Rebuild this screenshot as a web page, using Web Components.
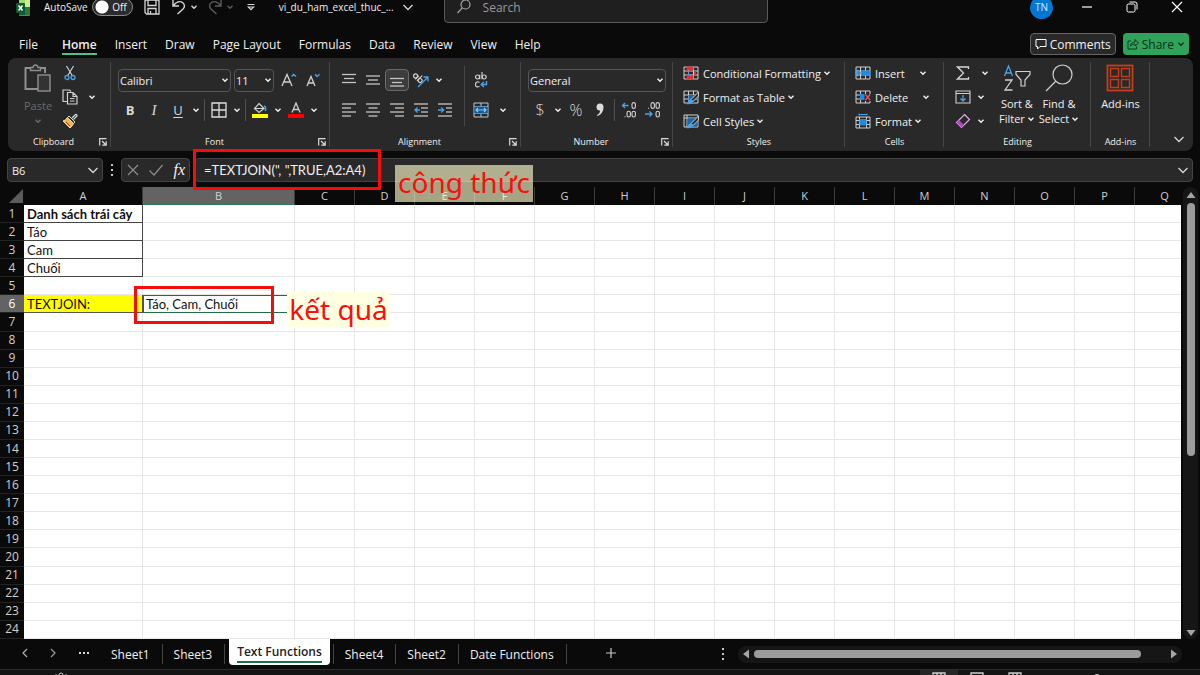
<!DOCTYPE html>
<html lang="vi">
<head>
<meta charset="utf-8">
<meta name="viewport" content="width=device-width, initial-scale=1">
<title>vi_du_ham_excel_thuc_... - Excel</title>
<style>
  html, body { margin: 0; height: 100%; overflow: hidden; background: #0a0a0a; }
  body { font-family: "Open Sans", "Noto Sans", sans-serif; font-size: 11px; color: #f0f0f0; }
</style>
</head>
<body>
<xl-app></xl-app>

<script>
const BASE = `
  *, *::before, *::after { box-sizing: border-box; }
  button, input, select { font: inherit; color: inherit; background: none; border: 0; margin: 0; padding: 0; }
  button { display: inline-flex; align-items: center; justify-content: center; white-space: nowrap; }
`;

class Base extends HTMLElement {
  connectedCallback() {
    if (this.shadowRoot) return;
    this.attachShadow({ mode: 'open' }).innerHTML = `<style>${BASE}${this.styles()}</style>${this.markup()}`;
  }
  styles() { return ''; }
  markup() { return '<slot></slot>'; }
}

/* name: [width, height, svg body] */
const lines = rows => rows.map(([y, a, b]) => `<path d="M${a} ${y}H${b}" stroke="#c4c4c4" stroke-width="1.3"/>`).join('');
const table = `<path d="M1 1H15V13H1ZM1 5H15M1 9H15M5.5 1V13M10.5 1V13" stroke="#d0d0d0"/>`;
const brush = `<path d="M15.500 2L8 9.500L10 11.500L15.500 6Z" fill="#2b2b2b" stroke="#cfcfcf"/><path d="M8 9.500Q5 9.500 5 12Q5 13.500 3 14Q9 15 10 11.500Z" fill="#4aa3e8"/>`;
const ICONS = {
  chev: [8, 8, `<path d="M1.500 2.800L4 5.300L6.500 2.800" stroke="currentColor" stroke-width="1.4"/>`],
  chevBig: [12, 12, `<path d="M1.500 4L6 8.500L10.500 4" stroke="#d6d6d6" stroke-width="1.3"/>`],
  logo: [14, 18, `<rect x="3" y="0" width="11" height="18" rx="1" fill="#21a366"/><path d="M3 0H9V9H3Z" fill="#9bdc6a"/><path d="M9 0H14V9H9Z" fill="#cdee8f"/><path d="M3 9H14V17H3Z" fill="#185c37"/><path d="M9 9H14V17H9Z" fill="#2a7a3c"/><rect x="0" y="5" width="9" height="10" rx="1" fill="#0f5a31"/><path d="M2.500 7.500L6.500 12.500M6.500 7.500L2.500 12.500" stroke="#fff" stroke-width="1.5"/>`],
  save: [16, 16, `<path d="M1 1H15V15H2.500L1 13.500ZM4 1V6.500H12V1M4 15V9.500H12V15M6.500 12V15" stroke="#d6d6d6" stroke-width="1.3"/>`],
  undo: [14, 16, `<path d="M1 1V7H7M1.500 6.500C4 3 8 1.500 10.500 3.500C13 5.500 13 8 11 10L5.500 15" stroke="currentColor" stroke-width="1.4"/>`],
  redo: [14, 16, `<path d="M13 1V7H7M12.500 6.500C10 3 6 1.500 3.500 3.500C1 5.500 1 8 3 10L8.500 15" stroke="currentColor" stroke-width="1.4"/>`],
  custom: [8, 8, `<path d="M.5 1.500H7.500M1.300 4L4 6.700L6.700 4Z" stroke="#d6d6d6" stroke-width="1.1"/>`],
  search: [14, 16, `<circle cx="8.500" cy="5.500" r="4.500" stroke="#a8a8a8" stroke-width="1.2"/><path d="M5.300 8.800L.5 14" stroke="#a8a8a8" stroke-width="1.2"/>`],
  min: [10, 10, `<path d="M0 5H10" stroke="#fff" stroke-width="1.2"/>`],
  restore: [12, 12, `<rect x="1" y="3" width="8" height="8" rx="1.500" stroke="#fff"/><path d="M3.500 1H9Q11 1 11 3V8.500" stroke="#fff"/>`],
  close: [12, 12, `<path d="M1 1L11 11M11 1L1 11" stroke="#fff" stroke-width="1.2"/>`],
  comment: [12, 12, `<path d="M1 1.500H11V8.500H5L2.500 11V8.500H1Z" stroke="#fff"/>`],
  share: [12, 12, `<path d="M4 3H1V11H9.500V8.500M3.500 8C4 5 6 4 8 4V1.500L11.500 5L8 8V6C6 6 5 6.500 3.500 8Z" stroke="#0d3a1d"/>`],
  paste: [28, 30, `<path d="M6 4H1.500V25H14M17 4H21V9" stroke="#8f8f8f" stroke-width="2"/><path d="M6.500 6.500V3.500H9Q9.500 1 11.500 1T14 3.500H16.500V6.500Z" stroke="#8f8f8f" stroke-width="1.4"/><rect x="14" y="11" width="12" height="16" stroke="#8f8f8f" stroke-width="1.4" fill="#333"/>`],
  cut: [12, 16, `<path d="M2.500 1L8.500 11M9.500 1L3.500 11" stroke="#d0d0d0" stroke-width="1.2"/><circle cx="3" cy="12.500" r="2" stroke="#4aa3e8" stroke-width="1.300"/><circle cx="9" cy="12.500" r="2" stroke="#4aa3e8" stroke-width="1.300"/>`],
  copy: [16, 16, `<path d="M5 12.500H1V1H7.500L9 2.500" stroke="#d0d0d0" stroke-width="1.200"/><path d="M5.500 3.500H11L15 7.500V15H5.500ZM11 3.500V7.500H15M8 9.500H12.500M8 12H12.500" stroke="#d0d0d0" stroke-width="1.200"/>`],
  painter: [16, 16, `<path d="M10 5L13.500 1.500Q15 1 15 3L11.500 6.500" stroke="#ddd" fill="#2b2b2b" stroke-width="1.200"/><path d="M7 3L13 9L11.500 10.500L5.500 4.500Z" stroke="#ddd"/><path d="M5.500 4.700Q3 8 1 8L8 15Q11 12.500 11.500 10.500Z" fill="#f0b24a" stroke="#ffe2a0"/><path d="M4 9L8 13" stroke="#7b4a10"/>`],
  launch: [8, 8, `<path d="M.7 7.500V.7H7.500M3 3L7 7M7.200 3.300V7.200H3.300" stroke="#dcdcdc" stroke-width="1.200"/>`],
  bigA: [16, 16, `<path d="M1 14L6 2.500L11 14M2.700 10H9.300" stroke="#d0d0d0" stroke-width="1.300"/><path d="M10.500 4.500L12.700 2.300L15 4.500" stroke="#4aa3e8" stroke-width="1.300"/>`],
  smallA: [16, 16, `<path d="M2 14L6 4.500L10 14M3.400 11H8.600" stroke="#d0d0d0" stroke-width="1.300"/><path d="M10 2.300L12.200 4.500L14.500 2.300" stroke="#4aa3e8" stroke-width="1.300"/>`],
  borders: [16, 16, `<path d="M1 1H15V15H1ZM1 8H15M8 1V15" stroke="#dedede" stroke-width="1.300"/>`],
  fill: [16, 16, `<path d="M7 1.500L12 6.500L7 10.500L2.500 6.500Z" stroke="#d0d0d0" stroke-width="1.200"/><path d="M2.500 6.500H12" stroke="#d0d0d0"/><path d="M12 4Q14 4 13.500 9" stroke="#4aa3e8" stroke-width="1.600"/><rect x="0" y="12" width="16" height="4" fill="#ff0"/>`],
  fontcolor: [16, 16, `<path d="M4 10.500L8 1L12 10.500M5.400 7.500H10.600" stroke="#d0d0d0" stroke-width="1.300"/><rect x="0" y="12" width="16" height="4" fill="#f00"/>`],
  aTop: [14, 14, lines([[1.5,0,14],[5.5,2,12],[9.5,0,14]])],
  aMid: [14, 14, lines([[3,0,14],[7,2,12],[11,0,14]])],
  aBot: [14, 14, lines([[5.5,0,14],[9.5,2,12],[13,0,14]])],
  left: [14, 14, lines([[1,0,14],[5,0,9],[9,0,14],[13,0,9]])],
  center: [14, 14, lines([[1,0,14],[5,2.5,11.5],[9,0,14],[13,2.5,11.5]])],
  right: [14, 14, lines([[1,0,14],[5,5,14],[9,0,14],[13,5,14]])],
  outdent: [14, 14, lines([[1,0,14],[5,7,14],[9,7,14],[13,0,14]]) + `<path d="M6 7H1M3.500 4.500L1 7L3.500 9.500" stroke="#4aa3e8" stroke-width="1.300"/>`],
  indent: [14, 14, lines([[1,0,14],[5,8,14],[9,8,14],[13,0,14]]) + `<path d="M0 7H5.500M3.200 4.500L5.700 7L3.200 9.500" stroke="#4aa3e8" stroke-width="1.300"/>`],
  orient: [16, 16, `<g transform="rotate(45 5 5)" stroke="#d0d0d0" stroke-width="1.200"><circle cx="2.500" cy="6" r="2"/><path d="M4.700 3.500V8.500M7 1V8.500"/><circle cx="9" cy="6" r="2"/></g><path d="M5 15L14.500 5.500M10.500 5H15V9.500" stroke="#4aa3e8" stroke-width="1.300"/>`],
  wrap: [14, 16, `<g stroke="#d0d0d0" stroke-width="1.200"><circle cx="3.500" cy="5" r="2"/><path d="M5.700 2.800V7.300M8 0V7.300"/><circle cx="10.200" cy="5" r="2"/><path d="M5.500 10.300Q1.500 9 1.500 12.500T5.500 14.500"/></g><path d="M12.500 9V12.500H7.500M9.800 10L7.300 12.500L9.800 15" stroke="#4aa3e8" stroke-width="1.500"/>`],
  merge: [16, 16, `<path d="M1 1H15V15H1ZM1 4.500H15M1 11.500H15M8 1V4.500M8 11.500V15" stroke="#b8c8d4"/><rect x="1.500" y="4.500" width="13" height="7" fill="#0d5a94"/><path d="M3 8H13M5 6L3 8L5 10M11 6L13 8L11 10" stroke="#8cc8f5" stroke-width="1.200"/>`],
  incDec: [16, 16, `<path d="M7.500 3.500H1.500M4 1L1.500 3.500L4 6" stroke="#4aa3e8" stroke-width="1.300"/><g stroke="#d0d0d0" stroke-width="1.100"><rect x="11" y=".6" width="3.400" height="5.800" rx="1.700"/><rect x="6" y="9.200" width="3.400" height="5.800" rx="1.700"/><rect x="11" y="9.200" width="3.400" height="5.800" rx="1.700"/><path d="M3.500 14.800H4.600"/></g>`],
  decDec: [16, 16, `<path d="M0 12H7M4.500 9.500L7 12L4.500 14.500" stroke="#4aa3e8" stroke-width="1.300"/><g stroke="#d0d0d0" stroke-width="1.100"><rect x="6" y=".6" width="3.400" height="5.800" rx="1.700"/><rect x="11" y=".6" width="3.400" height="5.800" rx="1.700"/><rect x="11" y="9.200" width="3.400" height="5.800" rx="1.700"/><path d="M3 6.200H4.100"/></g>`],
  comma: [10, 16, `<path d="M1.500 5A3.500 3.500 0 0 1 8.500 5C8.500 9.500 6 13 2.500 14L2 13C4 12 5 10.500 5 8.500A3.500 3.500 0 0 1 1.500 5Z" fill="#dcdcdc"/>`],
  cond: [16, 14, table + `<path d="M3.500 .5H10.500V4.500H3.500ZM3.500 9H10.500V13.500H3.500Z" fill="#e0303a"/><path d="M5.500 5V9H9" stroke="#4aa3e8"/><path d="M12 5V9" stroke="#e0303a" stroke-width="2"/>`],
  fmtTable: [16, 15, table + `<path d="M5.500 5H15V9H11V13H5.500Z" fill="#0f6cbd"/>` + brush],
  cellStyles: [16, 15, `<path d="M1 1H15V13H1ZM1 4H15M4 1V13" stroke="#d0d0d0"/><path d="M4.500 4.500H14.500V12.500H4.500Z" fill="#0f6cbd"/>` + brush],
  insert: [16, 14, table + `<path d="M6 4.500H15.500V9.500H6Z" fill="#1f8ae0"/><path d="M7 7H1M3.500 4L.8 7L3.500 10" stroke="#4aa3e8" stroke-width="1.600"/>`],
  del: [16, 14, table + `<path d="M5 4H10V10H5Z" fill="#1f8ae0"/><path d="M9.500 4H16V11H9.500Z" fill="#2b2b2b"/><path d="M10.500 4.500L15 10M15 4.500L10.500 10" stroke="#e8505a" stroke-width="1.400"/>`],
  format: [16, 16, `<path d="M1 4H15V15H1ZM1 7.500H15M1 11.500H15M4.500 4V15M11.500 4V15" stroke="#d0d0d0"/><path d="M4.500 6H11.500V12.500H4.500Z" fill="#1f8ae0"/><path d="M4 1.500H12M4 .5V2.500M12 .5V2.500" stroke="#4aa3e8"/>`],
  sigma: [14, 14, `<path d="M12.500 3V1H1.500L7.500 7L1.500 13H12.500V11" stroke="#d6d6d6" stroke-width="1.300"/>`],
  down: [16, 14, `<path d="M1 1H15V13H1ZM1 3.500H15" stroke="#d0d0d0" stroke-width="1.100"/><path d="M8 5V11M5.500 8.500L8 11L10.500 8.500" stroke="#4aa3e8" stroke-width="1.300"/>`],
  eraser: [16, 16, `<path d="M9.500 1.500L14.500 6.500L6.500 14.500L1.500 9.500Z" stroke="#dcb0e0" stroke-width="1.200"/><path d="M4 7L9 12L6.500 14.500L1.500 9.500Z" fill="#b146c2"/>`],
  sort: [28, 28, `<path d="M1.500 12L5.500 2L9.500 12M3 9H8" stroke="#4aa3e8" stroke-width="1.300"/><path d="M2 16H9L2 26H9.500" stroke="#d0d0d0" stroke-width="1.300"/><path d="M13 7.500H27V10.500L22 16V22H18V16L13 10.500Z" stroke="#d0d0d0" stroke-width="1.200"/>`],
  find: [28, 28, `<circle cx="17.500" cy="10.500" r="9.500" stroke="#d0d0d0" stroke-width="1.200"/><path d="M10.500 17.500L1 27" stroke="#d0d0d0" stroke-width="1.300"/>`],
  addins: [28, 28, `<rect x="1.500" y="1.500" width="25" height="25" stroke="#c43e1c" stroke-width="1.800"/><path d="M4.500 4.500H12.500V12.500H4.500ZM15.500 4.500H23.500V12.500H15.500ZM4.500 15.500H12.500V23.500H4.500ZM15.500 15.500H23.500V23.500H15.500Z" stroke="#c43e1c" stroke-width="1.400"/>`],
  cross: [12, 12, `<path d="M1 1L11 11M11 1L1 11" stroke="#8c8c8c" stroke-width="1.200"/>`],
  tick: [14, 12, `<path d="M.5 6.500L5 11L13.500 1" stroke="#8c8c8c" stroke-width="1.200"/>`],
  dotsV: [4, 14, `<path d="M1 1H3V3H1ZM1 6H3V8H1ZM1 11H3V13H1Z" fill="#c8c8c8"/>`],
  dotsH: [12, 4, `<path d="M1 1H3V3H1ZM5 1H7V3H5ZM9 1H11V3H9Z" fill="#d8d8d8"/>`],
  prev: [6, 10, `<path d="M5 1L1 5L5 9" stroke="#b0b0b0" stroke-width="1.200"/>`],
  next: [6, 10, `<path d="M1 1L5 5L1 9" stroke="#9a9a9a" stroke-width="1.200"/>`],
  plus: [12, 12, `<path d="M1 6H11M6 1V11" stroke="#c8c8c8" stroke-width="1.200"/>`],
  up: [10, 8, `<path d="M5 1L9.500 7H.5Z" fill="#a6a6a6"/>`],
  dn: [10, 8, `<path d="M5 7L9.500 1H.5Z" fill="#a6a6a6"/>`],
  lt: [8, 10, `<path d="M1 5L7 .5V9.500Z" fill="#a6a6a6"/>`],
  rt: [8, 10, `<path d="M7 5L1 .5V9.500Z" fill="#a6a6a6"/>`],
  corner: [14, 14, `<path d="M14 0V14H0Z" fill="#5c5c5c"/>`],
  viewGrid: [14, 12, `<path d="M1 1H13V11H1ZM1 4H13M5 1V11M9 1V11" stroke="#d0d0d0" stroke-width="1.300"/>`],
  viewPage: [14, 12, `<path d="M1 1H13V11H1Z" stroke="#d0d0d0" stroke-width="1.300"/><path d="M3 3H11V11H3Z" fill="#8a8a8a"/>`],
  person: [12, 12, `<circle cx="6" cy="3" r="2" stroke="#c8c8c8"/><path d="M0 3H2M10 3H12M2 9Q6 5 10 9" stroke="#c8c8c8"/>`],
};

customElements.define('xl-icon', class extends Base {
  styles() { return `:host { display: inline-flex; flex: none; } svg { display: block; fill: none; }`; }
  markup() {
    const [w, h, body] = ICONS[this.getAttribute('name')];
    return `<svg width="${w}" height="${h}" viewBox="0 0 ${w} ${h}" fill="none" aria-hidden="true">${body}</svg>`;
  }
});

/* Square ribbon tool, with an optional narrow menu arrow beside it. */
customElements.define('xl-tool', class extends Base {
  styles() { return `
    :host { display: inline-flex; align-items: center; height: 24px; }
    .main { width: 24px; height: 22px; border-radius: 4px; font-size: 13px; color: #d8d8d8; }
    .arrow { width: 12px; height: 22px; }
    :host([pressed]) .main { background: #3d3d3d; border: 1px solid #6a6a6a; }
    :host([spread]) .arrow { margin-left: 4px; }`; }
  markup() {
    const t = this.title, i = this.getAttribute('icon');
    return `<button class="main" aria-label="${t}">${i ? `<xl-icon name="${i}"></xl-icon>` : '<slot></slot>'}</button>` +
      (this.hasAttribute('menu') ? `<button class="arrow" aria-label="${t} menu"><xl-icon name="chev"></xl-icon></button>` : '');
  }
});

/* Icon with a text label on one line. */
customElements.define('xl-command', class extends Base {
  styles() { return `
    :host { display: flex; align-items: center; height: 24px; }
    .main { gap: 4px; height: 22px; }
    .arrow { width: 8px; height: 22px; margin-left: 2px; }
    :host([split]) .arrow { margin-left: 14px; }`; }
  markup() { return `<button class="main"><xl-icon name="${this.getAttribute('icon')}"></xl-icon><slot></slot></button>
    <button class="arrow" aria-label="${this.textContent} menu"><xl-icon name="chev"></xl-icon></button>`; }
});

/* Tall command: a large icon over one or two lines of text. */
customElements.define('xl-big', class extends Base {
  styles() { return `
    :host { display: block; }
    button { flex-direction: column; justify-content: flex-start; padding-top: 3px; }
    xl-icon { margin-bottom: 4px; }
    span { display: flex; align-items: center; gap: 2px; line-height: 15px; height: 15px; }
    span xl-icon { margin: 0; }
    :host([dim]) { color: #6b6b6b; }`; }
  markup() {
    const [a, b = ''] = this.getAttribute('lines').split('|');
    const arrow = this.hasAttribute('menu') ? `<span>${b}<xl-icon name="chev"></xl-icon></span>` : '';
    return `<button><xl-icon name="${this.getAttribute('icon')}"></xl-icon><span>${a}</span>${arrow}</button>`;
  }
});

customElements.define('xl-select', class extends Base {
  styles() { return `
    :host { display: inline-grid; height: 23px; font-size: 11px; }
    select, xl-icon { grid-area: 1 / 1; }
    select { appearance: none; width: 100%; height: 100%; padding: 0 14px 0 1px; border: 1px solid #555; border-radius: 4px; background: #292929; }
    xl-icon { align-self: center; justify-self: end; margin-right: 2px; pointer-events: none; }`; }
  markup() { return `<select aria-label="${this.title}"><option>${this.getAttribute('value')}</option></select><xl-icon name="chev"></xl-icon>`; }
});

customElements.define('xl-group', class extends Base {
  styles() { return `
    :host { display: flex; flex-direction: column; flex: none; padding: 3px 0 1px; position: relative; }
    :host::after { content: ""; position: absolute; right: 0; top: 4px; bottom: 4px; width: 1px; background: #454545; }
    .body { height: 73px; display: flex; }
    .foot { height: 16px; display: flex; align-items: center; font-size: 9px; line-height: 16px; }
    .foot span { flex: 1; text-align: center; }
    .foot button { width: 8px; height: 8px; margin-right: 4px; }`; }
  markup() { return `<div class="body"><slot></slot></div>
    <div class="foot"><span>${this.getAttribute('label')}</span>${this.hasAttribute('launcher') ? `<button aria-label="${this.getAttribute('label')} settings"><xl-icon name="launch"></xl-icon></button>` : ''}</div>`; }
});

customElements.define('xl-ribbon', class extends Base {
  styles() { return `
    :host { display: flex; margin: 0 7px 0 8px; background: #292929; border-radius: 8px; }
    .col { display: flex; flex-direction: column; }
    .lead { margin-left: 7px; }
    .wide { margin-left: 10px; }
    .two { padding-top: 4px; flex: none; }
    .row { display: flex; align-items: center; height: 30px; }
    .sep { width: 1px; height: 22px; background: #505050; margin: 0 2px; flex: none; }
    .tall { width: 1px; height: 60px; background: #454545; margin: 5px 4px 0 7px; }
    .clip { width: 103px; } .font { width: 219px; } .align { width: 191px; } .num { width: 152px; }
    .styles { width: 172px; } .cells { width: 99px; } .edit { width: 147px; } .add { width: 59px; }
    .add xl-big { margin: 0 auto; }
    .collapse { margin: auto 8px 6px auto; }
    .paste { margin-left: 16px; width: 30px; }
    .clipcol { margin-left: 4px; }
    .sort { margin-left: 8px; } .find { margin-left: 4px; }
    .family { width: 113px; } .size { width: 40px; margin: 0 3px; }
    .format { width: 138px; }
    b { font-weight: 700; } i { font-family: "Liberation Serif", serif; font-size: 15px; }
    .cur { font-size: 16px; font-weight: 300; }
    u { text-underline-offset: 2px; }`; }
  markup() { return `
    <xl-group class="clip" label="Clipboard" launcher>
      <xl-big class="paste" dim menu icon="paste" lines="Paste"></xl-big>
      <div class="col clipcol"><xl-tool title="Cut" icon="cut"></xl-tool><xl-tool title="Copy" icon="copy" menu spread></xl-tool><xl-tool title="Format Painter" icon="painter"></xl-tool></div>
    </xl-group>
    <xl-group class="font" label="Font" launcher>
      <div class="two lead">
        <div class="row"><xl-select class="family" title="Font" value="Calibri"></xl-select><xl-select class="size" title="Font size" value="11"></xl-select><xl-tool title="Increase font size" icon="bigA"></xl-tool><xl-tool title="Decrease font size" icon="smallA"></xl-tool></div>
        <div class="row"><xl-tool title="Bold"><b>B</b></xl-tool><xl-tool title="Italic"><i>I</i></xl-tool><xl-tool title="Underline" menu><u>U</u></xl-tool><span class="sep"></span><xl-tool title="Borders" icon="borders" menu></xl-tool><span class="sep"></span><xl-tool title="Fill color" icon="fill" menu></xl-tool><xl-tool title="Font color" icon="fontcolor" menu></xl-tool></div>
      </div>
    </xl-group>
    <xl-group class="align" label="Alignment" launcher>
      <div class="two lead">
        <div class="row"><xl-tool title="Top" icon="aTop"></xl-tool><xl-tool title="Middle" icon="aMid"></xl-tool><xl-tool title="Bottom" icon="aBot" pressed></xl-tool><xl-tool title="Orientation" icon="orient" menu></xl-tool></div>
        <div class="row"><xl-tool title="Left" icon="left"></xl-tool><xl-tool title="Center" icon="center"></xl-tool><xl-tool title="Right" icon="right"></xl-tool><xl-tool title="Decrease indent" icon="outdent"></xl-tool><xl-tool title="Increase indent" icon="indent"></xl-tool></div>
      </div>
      <span class="tall"></span>
      <div class="two">
        <div class="row"><xl-tool title="Wrap text" icon="wrap"></xl-tool></div>
        <div class="row"><xl-tool title="Merge" icon="merge" menu spread></xl-tool></div>
      </div>
    </xl-group>
    <xl-group class="num" label="Number" launcher>
      <div class="two lead">
        <div class="row"><xl-select class="format" title="Number format" value="General"></xl-select></div>
        <div class="row"><xl-tool title="Currency" menu><span class="cur">$</span></xl-tool><xl-tool title="Percent"><span class="cur">%</span></xl-tool><xl-tool title="Comma" icon="comma"></xl-tool><span class="sep"></span><xl-tool title="Increase decimal" icon="incDec"></xl-tool><xl-tool title="Decrease decimal" icon="decDec"></xl-tool></div>
      </div>
    </xl-group>
    <xl-group class="styles" label="Styles">
      <div class="col wide"><xl-command icon="cond">Conditional Formatting</xl-command><xl-command icon="fmtTable">Format as Table</xl-command><xl-command icon="cellStyles">Cell Styles</xl-command></div>
    </xl-group>
    <xl-group class="cells" label="Cells">
      <div class="col wide"><xl-command icon="insert" split>Insert</xl-command><xl-command icon="del" split>Delete</xl-command><xl-command icon="format">Format</xl-command></div>
    </xl-group>
    <xl-group class="edit" label="Editing">
      <div class="col lead"><xl-tool title="AutoSum" icon="sigma" menu spread></xl-tool><xl-tool title="Fill" icon="down" menu></xl-tool><xl-tool title="Clear" icon="eraser" menu></xl-tool></div>
      <xl-big class="sort" menu icon="sort" lines="Sort &amp;amp;|Filter"></xl-big>
      <xl-big class="find" menu icon="find" lines="Find &amp;amp;|Select"></xl-big>
    </xl-group>
    <xl-group class="add" label="Add-ins"><xl-big icon="addins" lines="Add-ins"></xl-big></xl-group>
    <button class="collapse" aria-label="Collapse ribbon"><xl-icon name="chevBig"></xl-icon></button>`; }
});

customElements.define('xl-titlebar', class extends Base {
  styles() { return `
    :host { display: flex; align-items: center; height: 14px; flex: none; padding: 0 16px; font-size: 10px; }
    label { display: flex; align-items: center; gap: 4px; margin-left: 14px; }
    .switch { display: grid; align-items: center; }
    .switch input, .switch span { grid-area: 1 / 1; }
    input[type=checkbox] { appearance: none; width: 41px; height: 18px; border: 1px solid #8a8a8a; border-radius: 9px; background: radial-gradient(circle at 9px 8px, #fff 6px, #2b2b2b 7px); }
    .switch span { justify-self: end; padding-right: 6px; pointer-events: none; }
    .tools { display: flex; align-items: center; margin-left: 11px; color: #d6d6d6; }
    .tools > * { height: 16px; }
    .undo { margin-left: 12px; gap: 4px; } .redo { margin-left: 10px; gap: 4px; color: #5c5c5c; } .custom { margin-left: 13px; }
    .name { margin-left: 24px; gap: 8px; }
    .search { display: flex; align-items: center; height: 31px; flex: 0 1 324px; margin-left: 30px; border: 1px solid #5a5a5a; border-radius: 4px; background: #1f1f1f; padding-left: 12px; gap: 12px; }
    .search input { flex: 1; min-width: 0; font-size: 12px; outline: 0; }
    .search input::placeholder { color: #9a9a9a; opacity: 1; }
    .win { display: flex; align-items: center; margin-left: auto; }
    .win button { width: 14px; height: 14px; margin-left: 31px; }
    .avatar { display: grid; place-items: center; width: 23px; height: 23px; border-radius: 50%; background: #0078d4; color: #cfe8ff; margin-right: -4px; }`; }
  markup() { return `
    <xl-icon name="logo"></xl-icon>
    <label>AutoSave <span class="switch"><input type="checkbox" role="switch"><span>Off</span></span></label>
    <div class="tools">
      <button aria-label="Save"><xl-icon name="save"></xl-icon></button>
      <button class="undo" aria-label="Undo"><xl-icon name="undo"></xl-icon><xl-icon name="chev"></xl-icon></button>
      <button class="redo" aria-label="Redo"><xl-icon name="redo"></xl-icon><xl-icon name="chev"></xl-icon></button>
      <button class="custom" aria-label="Customize"><xl-icon name="custom"></xl-icon></button>
    </div>
    <button class="name">vi_du_ham_excel_thuc_...<xl-icon name="chevBig"></xl-icon></button>
    <div class="search"><xl-icon name="search"></xl-icon><input type="search" aria-label="Search" placeholder="Search"></div>
    <div class="win"><span class="avatar">TN</span>
      <button aria-label="Minimize"><xl-icon name="min"></xl-icon></button>
      <button aria-label="Restore"><xl-icon name="restore"></xl-icon></button>
      <button aria-label="Close"><xl-icon name="close"></xl-icon></button></div>`; }
});

customElements.define('xl-menubar', class extends Base {
  styles() { return `
    :host { display: flex; align-items: center; height: 28px; margin-top: 16px; flex: none; padding: 0 11px 0 19px; font-size: 12px; }
    nav { display: flex; gap: 18px; }
    a { color: inherit; text-decoration: none; line-height: 17px; border-bottom: 2px solid transparent; padding-top: 3px; }
    a:first-child { margin-right: 6px; }
    a.on { font-weight: 600; border-color: #4cc38a; }
    .right { display: flex; gap: 7px; margin-left: auto; }
    .right button { height: 22px; border-radius: 4px; gap: 3px; padding: 0 4px; }
    .c { background: #292929; border: 1px solid #666; }
    .s { background: #2fa35a; color: #0a2e17; }`; }
  markup() { return `
    <nav>${['File','Home','Insert','Draw','Page Layout','Formulas','Data','Review','View','Help'].map(t => `<a href="#"${t === 'Home' ? ' class="on"' : ''}>${t}</a>`).join('')}</nav>
    <div class="right"><button class="c"><xl-icon name="comment"></xl-icon>Comments</button><button class="s"><xl-icon name="share"></xl-icon>Share<xl-icon name="chev"></xl-icon></button></div>`; }
});

customElements.define('xl-formulabar', class extends Base {
  styles() { return `
    :host { display: flex; align-items: center; height: 24px; margin: 7px 7px 5px; flex: none; font-size: 12px; }
    .box { display: flex; align-items: center; height: 24px; border: 1px solid #444; border-radius: 4px; background: #292929; }
    input { flex: 1; min-width: 0; outline: 0; }
    .name { width: 96px; padding: 0 3px 0 4px; font-size: 11px; }
    .dots { margin: 0 7px; }
    .acts { width: 69px; justify-content: space-between; padding: 0 4px 0 5px; }
    em { font-family: "Liberation Serif", serif; font-size: 16px; line-height: 16px; }
    .formula { flex: 1; margin-left: 5px; padding: 0 3px 0 8px; font-family: Lato, "Open Sans", sans-serif; font-size: 13px; }`; }
  markup() { return `
    <div class="box name"><input aria-label="Name box" value="B6"><xl-icon name="chevBig"></xl-icon></div>
    <xl-icon class="dots" name="dotsV"></xl-icon>
    <div class="box acts"><button aria-label="Cancel"><xl-icon name="cross"></xl-icon></button><button aria-label="Enter"><xl-icon name="tick"></xl-icon></button><button aria-label="Insert function"><em>fx</em></button></div>
    <div class="box formula"><input aria-label="Formula" value='=TEXTJOIN(", ",TRUE,A2:A4)'><xl-icon name="chevBig"></xl-icon></div>`; }
});

const CELLS = { A1: 'Danh sách trái cây', A2: 'Táo', A3: 'Cam', A4: 'Chuối', A6: 'TEXTJOIN:', B6: 'Táo, Cam, Chuối' };
customElements.define('xl-sheet', class extends Base {
  styles() { return `
    :host { display: block; flex: 1; min-width: 0; overflow: hidden; background: #fff; }
    table { width: 1195px; height: 100%; table-layout: fixed; border-collapse: separate; border-spacing: 0; }
    tr { height: 18px; }
    th, td { padding: 0; overflow: hidden; white-space: nowrap; }
    th { background: #0a0a0a; color: #d0d0d0; font-weight: 400; font-size: 12px; line-height: 14px; text-align: center; }
    thead th { height: 18px; border-right: 1px solid #3c3c3c; font-size: 11px; }
    thead th:first-child { border: 0; }
    thead xl-icon { vertical-align: top; margin-left: 8px; }
    thead .on { background: #636363; border-bottom: 1px solid #2b7d55; }
    tbody th { border-bottom: 1px solid #222; }
    tbody .on { background: #636363; color: #fff; }
    td { background: #fff; color: #111; border-right: 1px solid #e6e6e6; border-bottom: 1px solid #e6e6e6; font: 13px/14px Lato, "Open Sans", sans-serif; padding-left: 3px; }
    .A1, .A2, .A3, .A4 { border-color: #444; }
    .A1 { font-weight: 700; }
    .A6 { background: #ff0; border-color: #555; }
    .B6 { box-shadow: inset 0 1px #1f6e43, inset 1px 0 #1f6e43; border-color: #1f6e43; }`; }
  markup() {
    const cols = [...'ABCDEFGHIJKLMNOPQ'];
    const width = c => c === 'A' ? 119 : c === 'B' ? 152 : 60;
    let rows = '';
    for (let r = 1; r <= 24; r++) rows += `<tr><th scope="row"${r === 6 ? ' class="on"' : ''}>${r}</th>${cols.map(c => `<td class="${c + r}">${CELLS[c + r] || ''}</td>`).join('')}</tr>`;
    return `<table><colgroup><col style="width:24px">${cols.map(c => `<col style="width:${width(c)}px">`).join('')}</colgroup>
      <thead><tr><th><xl-icon name="corner"></xl-icon></th>${cols.map(c => `<th scope="col"${c === 'B' ? ' class="on"' : ''}>${c}</th>`).join('')}</tr></thead><tbody>${rows}</tbody></table>`;
  }
});

customElements.define('xl-scroll', class extends Base {
  styles() { return `
    :host { display: flex; align-items: center; background: #161616; border-radius: 8px; flex: none; }
    .rail { flex: 1; display: flex; align-self: stretch; }
    .thumb { background: #9c9c9c; border-radius: 4px; }
    :host([dir=v]) { flex-direction: column; width: 15px; margin: 0 2px 0 2px; padding: 4px 0 2px; }
    :host([dir=v]) .rail { justify-content: center; margin: 4px 0; }
    :host([dir=v]) .thumb { width: 8px; height: 60%; }
    :host([dir=h]) { height: 17px; flex: 0 1 444px; padding: 0 4px; }
    :host([dir=h]) .rail { align-items: center; margin: 0 4px; }
    :host([dir=h]) .thumb { height: 8px; width: 94%; }`; }
  markup() {
    const v = this.getAttribute('dir') === 'v';
    return `<xl-icon name="${v ? 'up' : 'lt'}"></xl-icon><div class="rail"><div class="thumb"></div></div><xl-icon name="${v ? 'dn' : 'rt'}"></xl-icon>`;
  }
});

customElements.define('xl-tabs', class extends Base {
  styles() { return `
    :host { display: flex; align-items: center; height: 30px; flex: none; font-size: 12px; padding-right: 18px; }
    .nav { display: flex; gap: 22px; margin: 0 10px 2px 22px; align-items: center; }
    .nav button { height: 12px; min-width: 6px; }
    .tabs { display: flex; height: 30px; align-items: center; }
    .tabs > button { height: 20px; padding: 2px 12px 0 11px; border-right: 1px solid #444; line-height: 18px; }
    .tabs > .on { align-self: flex-start; height: 26px; margin: 0 3px 0 4px; padding: 0 8px; background: #fff; color: #222; border: 0; border-radius: 0 0 4px 4px; font-weight: 600; }
    .tabs > .on + button { border-left: 1px solid #444; }
    .on span { border-bottom: 2px solid #1e7145; line-height: 19px; }
    .add { margin: 0 auto 2px 38px; }
    .dots { margin: 0 13px 0 8px; }`; }
  markup() { return `
    <div class="nav"><button aria-label="Previous"><xl-icon name="prev"></xl-icon></button><button aria-label="Next"><xl-icon name="next"></xl-icon></button><button aria-label="All sheets"><xl-icon name="dotsH"></xl-icon></button></div>
    <div class="tabs"><button>Sheet1</button><button>Sheet3</button><button class="on"><span>Text Functions</span></button><button>Sheet4</button><button>Sheet2</button><button>Date Functions</button></div>
    <button class="add" aria-label="New sheet"><xl-icon name="plus"></xl-icon></button>
    <xl-icon class="dots" name="dotsV"></xl-icon>
    <xl-scroll dir="h"></xl-scroll>`; }
});

customElements.define('xl-status', class extends Base {
  styles() { return `
    :host { display: flex; height: 6px; flex: none; overflow: hidden; background: #141414; border-top: 1px solid #2c2c2c; padding: 0 100px 0 55px; }
    xl-icon { margin-top: 2px; }
    .views { display: flex; margin-left: auto; }
    .views span { width: 38px; display: flex; justify-content: center; }
    .views .on { background: #262626; }
    .knob { width: 6px; height: 6px; border-radius: 3px; background: #bbb; margin: 4px 0 0 60px; }`; }
  markup() { return `<xl-icon name="person"></xl-icon><div class="views"><span class="on"><xl-icon name="viewGrid"></xl-icon></span><span><xl-icon name="viewPage"></xl-icon></span><span><xl-icon name="viewGrid"></xl-icon></span></div><i class="knob"></i>`; }
});

/* Reviewer marks drawn over the workbook: a red frame or a red caption. */
customElements.define('xl-mark', class extends Base {
  styles() { return `
    :host { position: absolute; pointer-events: none; z-index: 2; }
    :host([frame]) { border: 3px solid #f40d0d; }
    :host([note]) { color: #fa0f0f; font: 28px/34px "Noto Sans", "Open Sans", sans-serif; text-align: center; white-space: nowrap; }`; }
});

customElements.define('xl-app', class extends Base {
  styles() { return `
    :host { position: relative; display: flex; flex-direction: column; height: 100vh; overflow: hidden; background: #0a0a0a; }
    xl-ribbon { flex: none; }
    .work { flex: 1; min-height: 0; display: flex; }
    .f1 { left: 193px; top: 149px; width: 188px; height: 41px; }
    .f2 { left: 134px; top: 286px; width: 140px; height: 38px; }
    .n1 { left: 395px; top: 165px; width: 138px; height: 37px; background: rgba(254, 254, 205, .64); }
    .n2 { left: 287px; top: 292px; width: 103px; height: 36px; background: #ffffe1; }`; }
  markup() { return `
    <xl-titlebar></xl-titlebar><xl-menubar></xl-menubar><xl-ribbon></xl-ribbon><xl-formulabar></xl-formulabar>
    <div class="work"><xl-sheet></xl-sheet><xl-scroll dir="v"></xl-scroll></div>
    <xl-tabs></xl-tabs><xl-status></xl-status>
    <xl-mark frame class="f1"></xl-mark><xl-mark frame class="f2"></xl-mark>
    <xl-mark note class="n1">công thức</xl-mark><xl-mark note class="n2">kết quả</xl-mark>`; }
});
</script>
</body>
</html>
